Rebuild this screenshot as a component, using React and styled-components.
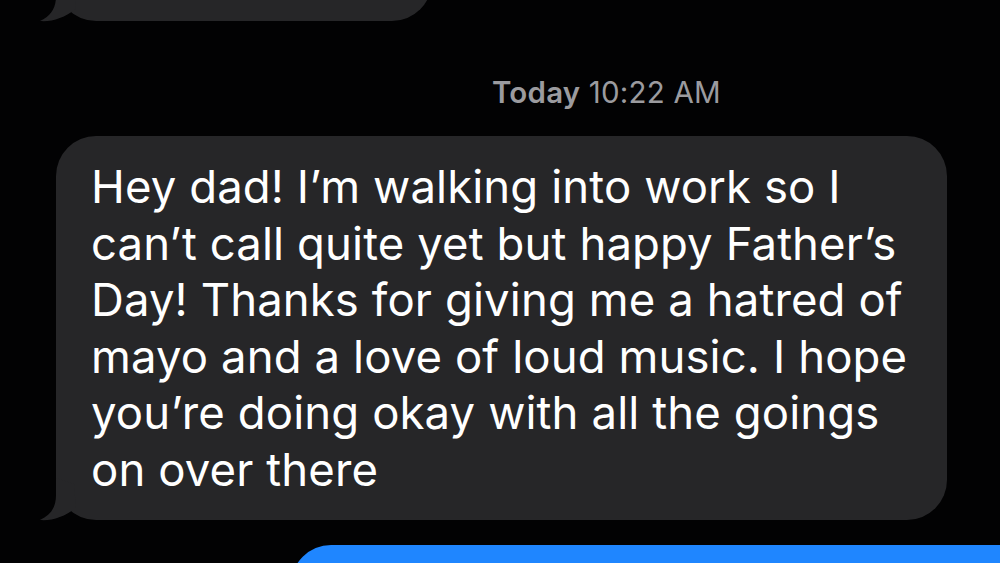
import React from 'react';
import styled, { createGlobalStyle } from 'styled-components';

const GlobalStyle = createGlobalStyle`
  html, body {
    margin: 0;
    padding: 0;
    background: #000;
  }
  body {
    font-family: Inter, "Liberation Sans", Arial, sans-serif;
    -webkit-font-smoothing: antialiased;
  }
`;

const Screen = styled.div`
  width: 1000px;
  height: 563px;
  overflow: hidden;
  background: #020203;
  display: flex;
  flex-direction: column;
`;

const IncomingRow = styled.div`
  position: relative;
  margin-left: 56px;
  margin-top: ${props => props.offset || 0}px;
  align-self: flex-start;
`;

const Bubble = styled.div`
  background: #262628;
  border-radius: 40px;
  color: #fff;
  width: ${props => props.width}px;
  height: ${props => (props.height ? props.height + 'px' : 'auto')};
  box-sizing: border-box;
  padding: ${props => (props.empty ? '0' : '23px 33px 22px 35px')};
`;

const Tail = styled.svg`
  position: absolute;
  left: -16px;
  bottom: 0;
  width: 60px;
  height: 42px;
  overflow: visible;
`;

const MessageText = styled.div`
  font-size: 45.5px;
  line-height: 56.5px;
  letter-spacing: 0.1px;
  white-space: nowrap;
`;

const Line = styled.span`
  display: block;
`;

const Timestamp = styled.div`
  margin-top: 53px;
  margin-left: 492px;
  font-size: 29.5px;
  line-height: 36px;
  color: #9b9b9f;
  white-space: nowrap;
  letter-spacing: 0.2px;
`;

const Day = styled.span`
  font-weight: 600;
`;

const OutgoingBubble = styled.div`
  margin-top: 25px;
  margin-left: 291px;
  height: 80px;
  flex-shrink: 0;
  background: #1f86ff;
  border-radius: 40px 0 0 0;
`;

// tail drawn in a frame whose origin sits 16px left of the bubble, at its bottom
function BubbleTail() {
  return (
    <Tail viewBox="0 0 60 42">
      <path
        d="M16 0 L16 17 C16 29 11 37 0 42 C12 43 24 39 36 30 L34 6 Z"
        fill="#262628"
      />
    </Tail>
  );
}

const lines = [
  'Hey dad! I\u2019m walking into work so I',
  'can\u2019t call quite yet but happy Father\u2019s',
  'Day! Thanks for giving me a hatred of',
  'mayo and a love of loud music. I hope',
  'you\u2019re doing okay with all the goings',
  'on over there',
];

export default function App() {
  return (
    <>
      <GlobalStyle />
      <Screen>
        <IncomingRow offset={-100}>
          <Bubble width={376} height={121} empty />
          <BubbleTail />
        </IncomingRow>

        <Timestamp>
          <Day>Today</Day> 10:22 AM
        </Timestamp>

        <IncomingRow offset={26}>
          <Bubble width={891}>
            <MessageText>
              {lines.map((l, i) => (
                <Line key={i}>{l}</Line>
              ))}
            </MessageText>
          </Bubble>
          <BubbleTail />
        </IncomingRow>

        <OutgoingBubble />
      </Screen>
    </>
  );
}
